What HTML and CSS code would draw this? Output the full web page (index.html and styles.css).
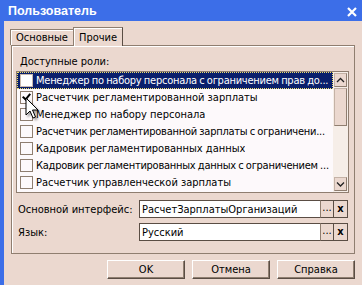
FILE: index.html
```html
<!DOCTYPE html>
<html lang="ru">
<head>
    <meta charset="UTF-8">
    <title>Пользователь</title>
    <link rel="stylesheet" href="styles.css">
</head>
<body>
    <div class="titlebar">
        <span class="title">Пользователь</span>
        <svg class="close" width="10" height="10" viewBox="0 0 10 10">
            <path d="M1 1 L9 9 M9 1 L1 9" stroke="#fff" stroke-width="2.2" fill="none"/>
        </svg>
    </div>
    <div class="frame">
        <div class="tabs">
            <div class="tab">Основные</div>
            <div class="tab active">Прочие</div>
        </div>
        <div class="panel">
            <div class="caption">Доступные роли:</div>
            <div class="listbox">
                <ul class="roles">
                    <li class="role selected long"><span class="check"></span><span class="name">Менеджер по набору персонала с ограничением прав до...</span></li>
                    <li class="role"><span class="check checked"></span><span class="name">Расчетчик регламентированной зарплаты</span></li>
                    <li class="role"><span class="check"></span><span class="name">Менеджер по набору персонала</span></li>
                    <li class="role long"><span class="check"></span><span class="name">Расчетчик регламентированной зарплаты с ограничени...</span></li>
                    <li class="role"><span class="check"></span><span class="name">Кадровик регламентированных данных</span></li>
                    <li class="role long"><span class="check"></span><span class="name">Кадровик регламентированных данных с ограничением ...</span></li>
                    <li class="role"><span class="check"></span><span class="name">Расчетчик управленческой зарплаты</span></li>
                </ul>
                <div class="scrollbar">
                    <div class="sb-btn">
                        <svg width="9" height="6" viewBox="0 0 9 6"><path d="M1 5 L4.5 1.5 L8 5" stroke="#222" stroke-width="1.3" fill="none"/></svg>
                    </div>
                    <div class="sb-thumb"></div>
                    <div class="sb-track"></div>
                    <div class="sb-btn">
                        <svg width="9" height="6" viewBox="0 0 9 6"><path d="M1 1.5 L4.5 5 L8 1.5" stroke="#222" stroke-width="1.3" fill="none"/></svg>
                    </div>
                </div>
            </div>
            <div class="field">
                <label class="field-label">Основной интерфейс:</label>
                <div class="field-input">РасчетЗарплатыОрганизаций</div>
                <span class="field-btn">...</span>
                <span class="field-btn clear">x</span>
            </div>
            <div class="field">
                <label class="field-label">Язык:</label>
                <div class="field-input">Русский</div>
                <span class="field-btn">...</span>
                <span class="field-btn clear">x</span>
            </div>
        </div>
        <div class="buttons">
            <button class="btn">OK</button>
            <button class="btn">Отмена</button>
            <button class="btn">Справка</button>
        </div>
    </div>

    <svg class="cursor" width="14" height="24" viewBox="0 0 14 24">
        <path d="M1 1 L1 18 L5 14 L8 21 L10.5 20 L7.5 13 L13 13 Z" fill="#fff" stroke="#000" stroke-width="1"/>
    </svg>
</body>
</html>
```

FILE: styles.css
```css
:root {
    --face: #ebd8cf;
    --line: #8f7e70;
    --dark: #5a4d44;
    --title: #3c6ee8;
    --highlight: #0a1f6c;
}

body {
    margin: 0;
    width: 362px;
    height: 285px;
    overflow: hidden;
    background: var(--face);
    font-family: 'DejaVu Sans Condensed', 'Liberation Sans', sans-serif;
    font-size: 11px;
    color: #000;
    position: relative;
}

.titlebar {
    height: 21px;
    background: var(--title);
    display: flex;
    align-items: center;
    justify-content: space-between;
    padding: 0 5px 0 8px;
    box-sizing: border-box;
}

.title {
    color: #fff;
    font-family: 'Liberation Sans', sans-serif;
    font-weight: bold;
    font-size: 12.5px;
    padding-top: 1px;
}

.close {
    margin-top: 2px;
}

.frame {
    border-left: 4px solid var(--title);
    height: 264px;
    padding: 6px 7px 0 6px;
    box-sizing: border-box;
}

.tabs {
    display: flex;
    align-items: flex-end;
    height: 18px;
}

.tab {
    height: 15px;
    line-height: 15px;
    padding: 0 5px;
    border: 1px solid var(--line);
    border-bottom: none;
    box-shadow: inset 1px 1px 0 #fff;
}

.tab.active {
    height: 18px;
    line-height: 19px;
    margin-left: -1px;
    background: var(--face);
    position: relative;
    top: 1px;
    border-right-color: var(--dark);
}

.panel {
    margin-left: 1px;
    border: 1px solid var(--line);
    box-shadow: inset 1px 1px 0 #fff;
    height: 209px;
    box-sizing: border-box;
    padding: 9px 5px 0 4px;
}

.caption {
    padding-left: 4px;
    height: 16px;
}

.listbox {
    display: flex;
    border: 1px solid var(--line);
    background: #fdf9fb;
    height: 122px;
    box-sizing: border-box;
}

.roles {
    list-style: none;
    margin: 0;
    padding: 0;
    flex: 1;
    min-width: 0;
}

.role {
    display: flex;
    align-items: center;
    height: 17px;
    padding-left: 3px;
    white-space: nowrap;
    overflow: hidden;
}

.role.long .name {
    letter-spacing: -0.25px;
    word-spacing: -0.5px;
}

.role.selected {
    background: var(--highlight);
    color: #fff;
    outline: 1px dotted #f0e070;
    outline-offset: -1px;
}

.check {
    flex: none;
    width: 11px;
    height: 11px;
    border: 1px solid var(--line);
    background: #fdf9fb;
    margin-right: 3px;
    position: relative;
}

.selected .check {
    background: #fff;
    border-color: #c8b8ae;
}

.check.checked::after {
    content: "";
    position: absolute;
    left: 3px;
    top: 0;
    width: 3px;
    height: 6px;
    border: solid #000;
    border-width: 0 2px 2px 0;
    transform: rotate(40deg);
}

.name {
    overflow: hidden;
}

.scrollbar {
    width: 15px;
    flex: none;
    display: flex;
    flex-direction: column;
    background: #f6eee8;
    padding: 1px 1px;
    box-sizing: border-box;
}

.sb-btn {
    height: 14px;
    background: var(--face);
    border: 1px solid #c4b2a6;
    border-right-color: var(--line);
    border-bottom-color: var(--line);
    display: flex;
    align-items: center;
    justify-content: center;
    box-sizing: border-box;
}

.sb-thumb {
    height: 38px;
    margin-top: 1px;
    background: var(--face);
    border: 1px solid #c4b2a6;
    border-right-color: var(--line);
    border-bottom-color: var(--line);
    box-sizing: border-box;
}

.sb-track {
    flex: 1;
}

.field {
    display: flex;
    align-items: center;
    margin-top: 7px;
    height: 18px;
}

.field + .field {
    margin-top: 5px;
}

.field-label {
    width: 121px;
    padding-left: 2px;
    white-space: nowrap;
}

.field-input {
    width: 181px;
    height: 18px;
    line-height: 17px;
    box-sizing: border-box;
    border: 1px solid var(--dark);
    border-right: none;
    background: #fff;
    padding-left: 2px;
    white-space: nowrap;
    overflow: hidden;
}

.field-btn {
    width: 14px;
    height: 18px;
    box-sizing: border-box;
    border: 1px solid var(--dark);
    border-left-color: var(--line);
    background: var(--face);
    text-align: center;
    line-height: 14px;
}

.field-btn + .field-btn {
    border-left: none;
}

.field-btn.clear {
    font-weight: bold;
    line-height: 15px;
}

.buttons {
    display: flex;
    justify-content: flex-end;
    gap: 7px;
    margin-top: 6px;
}

.btn {
    width: 78px;
    height: 19px;
    padding: 0;
    font-family: inherit;
    font-size: 11px;
    background: var(--face);
    border: 1px solid;
    border-color: #fff var(--dark) var(--dark) #fff;
    box-shadow: inset -1px -1px 0 var(--line);
    color: #000;
}

.cursor {
    position: absolute;
    left: 25px;
    top: 97px;
    filter: drop-shadow(2px 2px 1px rgba(0, 0, 0, 0.35));
}
```
